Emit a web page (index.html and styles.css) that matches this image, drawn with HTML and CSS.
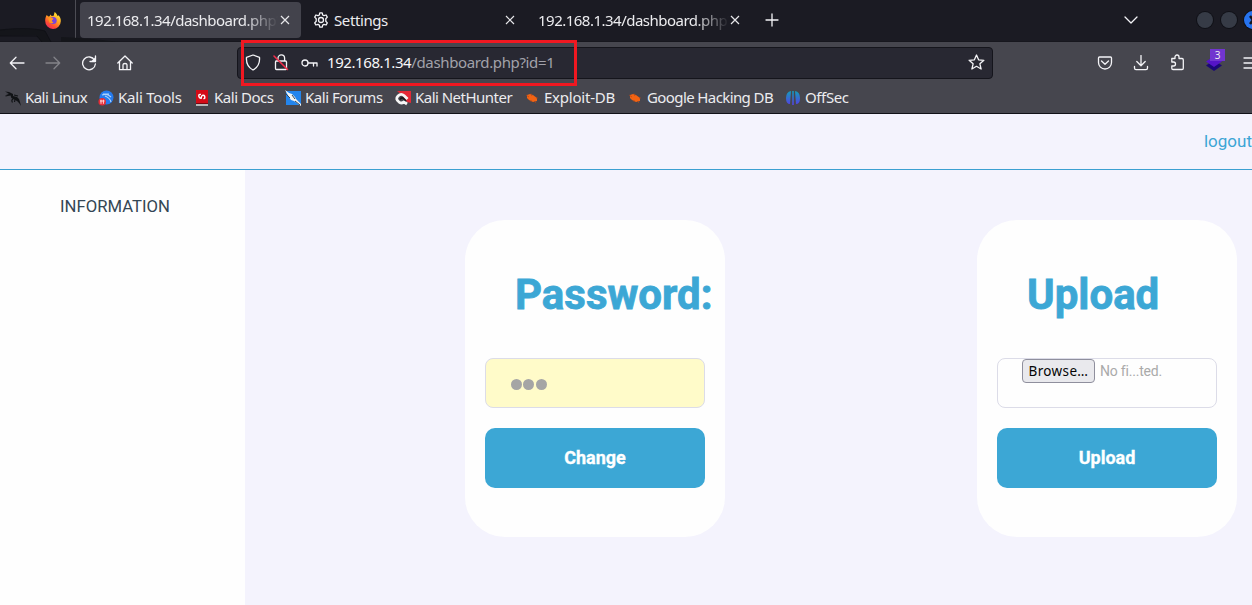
FILE: index.html
```html
<!DOCTYPE html>
<html lang="en">
<head>
<meta charset="utf-8">
<title>Dashboard</title>
<link rel="stylesheet" href="styles.css">
</head>
<body>
<div class="browser">
  <header class="tabs">
    <svg class="backdrop" width="240" height="42" viewBox="0 0 240 42"><path d="M0 30C18 28 34 28 45 31L51 42H42L36 35 0 36ZM61 37Q88 38 120 42H61Z" fill="#14151a"/><path d="M0 30C18 28 34 28 45 31L51 42M0 36H37L42 42" fill="none" stroke="#101116"/></svg>
    <svg class="fox" width="16" height="17" viewBox="0 0 16 17"><defs><linearGradient id="ff" x1=".8" y1="0" x2=".2" y2="1"><stop stop-color="#fff13a"/><stop offset=".45" stop-color="#ff9b20"/><stop offset=".75" stop-color="#ff4b35"/><stop offset="1" stop-color="#ed2765"/></linearGradient></defs><path d="M1.7 3L3.3 4.5 4.6 4.3 5.5 2.6 6.6 4 8.7 3.7 9.6 0C11 1 12 2.4 12.5 4L13.4 3.3C15.1 4.7 16 7 15.8 9.2A7.8 7.8 0 0 1 .2 9C.1 6.8.7 4.6 1.7 3Z" fill="url(#ff)"/><circle cx="8.2" cy="8.5" r="3.5" fill="#7944dc"/><path d="M3.2 6.4Q6 5.2 8.6 6.7L7 8.2Q6 9.3 8.5 10.4 6.8 12 4.4 10.5Z" fill="#ff9920"/></svg>
    <div class="tab tab-active"><span class="fade">192.168.1.34/dashboard.php?</span><svg class="close" width="10" height="10"><path d="M1 1L9 9M9 1L1 9"/></svg></div>
    <div class="tab tab-settings"><svg class="line" width="16" height="16" viewBox="0 0 16 16"><circle cx="8" cy="8" r="2.5"/><path d="M6.8.9H9.2L9.7 3 11 3.7 13.1 3 14.3 5.1 12.8 6.7V9.3L14.3 10.9 13.1 13 11 12.4 9.7 13.1 9.2 15.2H6.8L6.3 13.1 5 12.4 2.9 13 1.7 10.9 3.2 9.3V6.7L1.7 5.1 2.9 3 5 3.7 6.3 3Z"/></svg><span class="title">Settings</span><svg class="close" width="10" height="10"><path d="M1 1L9 9M9 1L1 9"/></svg></div>
    <div class="tab tab-last"><span class="fade">192.168.1.34/dashboard.php?</span><svg class="close" width="10" height="10"><path d="M1 1L9 9M9 1L1 9"/></svg></div>
    <svg class="line plus" width="14" height="14"><path d="M7 1V13M1 7H13"/></svg>
    <svg class="line chevron" width="14" height="8"><path d="M1 1L7 7 13 1"/></svg>
    <div class="controls"><i></i><i></i><i class="shut"><svg width="18" height="18"><path d="M6 5L12 13M12 5L6 13" fill="none" stroke="#11151f" stroke-width="2.5"/></svg></i></div>
  </header>
  <nav class="toolbar">
    <svg class="line" width="16" height="16" viewBox="0 0 16 16"><path d="M15 8H1.5M7 2.3L1.3 8 7 13.7"/></svg>
    <svg class="line dim" width="16" height="16" viewBox="0 0 16 16"><path d="M1 8H14.5M9 2.3L14.7 8 9 13.7"/></svg>
    <svg class="line" width="16" height="16" viewBox="0 0 16 16"><path d="M13.6 5.2A6.4 6.4 0 1 0 14.4 9"/><path d="M14.5 1V6.5H9" /><path d="M14.5 2V6.5H10Z" fill="#f4f4f7" stroke="none"/></svg>
    <svg class="line" width="16" height="16" viewBox="0 0 16 16"><path d="M.8 8L8 1 15.2 8M2.5 6.8V14.7H13.5V6.8M6 14.5V9.8Q6 8.5 8 8.5T10 9.8V14.5"/></svg>
    <div class="address">
      <svg class="line" width="16" height="17" viewBox="0 0 16 17"><path d="M8 1L14.5 3.3C15 8.8 13 13.2 8 16 3 13.2 1 8.8 1.5 3.3Z"/></svg>
      <svg class="line" width="16" height="17" viewBox="0 0 16 17"><path d="M5 7V4.2A3.3 3.3 0 0 1 11.6 4.2V7M3 7H12.5Q13.5 7 13.5 8V14.8Q13.5 15.5 12.8 15.5H3.5Q2.5 15.5 2.5 14.5V8Q2.5 7 3.5 7"/><path d="M1 2L14.5 15.5" stroke="#f52d4b" stroke-width="1.5"/></svg>
      <svg class="line" width="17" height="12" viewBox="0 0 17 12"><circle cx="4" cy="6" r="3"/><path d="M7 6H16V9M12.5 6V9"/></svg>
      <span class="url"><b>192.168.1.34</b>/dashboard.php?id=1</span>
      <svg class="line star" width="17" height="17" viewBox="0 0 17 17"><path d="M8.5 1L10.6 5.8 15.9 6.3 11.9 9.8 13.1 15 8.5 12.3 3.9 15 5.1 9.8 1.1 6.3 6.4 5.8Z"/></svg>
    </div>
    <div class="actions">
      <svg class="line" width="16" height="16" viewBox="0 0 16 16"><path d="M2.5 2H13.5Q14.5 2 14.5 3V7.5A6.5 6.5 0 0 1 1.5 7.5V3Q1.5 2 2.5 2ZM4.5 6L8 9.3 11.5 6"/></svg>
      <svg class="line" width="16" height="16" viewBox="0 0 16 16"><path d="M8 .5V10.5M3.8 6.5L8 10.7 12.2 6.5M1.5 11.5V13Q1.5 14.7 3 14.7H13Q14.5 14.7 14.5 13V11.5"/></svg>
      <svg class="line" width="16" height="17" viewBox="0 0 16 17"><path d="M2.8 4.5H6V3A2 2 0 0 1 10 3V4.5H13Q14.3 4.5 14.3 6V14.2Q14.3 15.5 13 15.5H4Q2.8 15.5 2.8 14.2V12H4.5A1.8 1.8 0 0 0 4.5 8H2.8Z"/></svg>
      <div class="layers"><svg width="18" height="16" viewBox="0 0 18 16"><path d="M9 5L17 10.5 9 16 1 10.5Z" fill="#1b0877"/><path d="M9 1L17 6.5 9 12 1 6.5Z" fill="#5514c7"/></svg><span>3</span></div>
      <svg class="line" width="16" height="12"><path d="M1 1H16M1 6H16M1 11H16"/></svg>
    </div>
  </nav>
  <nav class="bookmarks">
    <a><svg width="16" height="16"><path d="M0 1.5L4 2 8 4 8 6 12 7Q15 9 15 12L16 16Q13 10.5 8.5 9.2 5.5 8 5.5 5.5L1 4 4 3.8Z" fill="#101215"/><path d="M.5 6L5 5M9 5L13 6M8 9Q6 10 7.5 12.5M10 9.5L9.5 12" fill="none" stroke="#101215" stroke-width="1.2"/></svg><span class="bm1">Kali Linux</span></a>
    <a><svg width="16" height="16"><circle cx="8.5" cy="7.5" r="7" fill="#247aee"/><path d="M4 5Q9 3 13 7M7 6Q12 8 13 12M5 4L11 4" fill="none" stroke="#acd2fc" stroke-width="1.2"/><circle cx="4.2" cy="11.8" r="3.8" fill="#e42c36"/><path d="M3 9.7V13.8M5.4 9.7V13.8M2 11H6.5" stroke="#ffd6d9"/></svg><span class="bm2">Kali Tools</span></a>
    <a><svg width="16" height="16"><path d="M2 0H14V13H2Z" fill="#d40b17"/><path d="M2 15H14" stroke="#ddd" stroke-width="1.5"/><path d="M2 13.5H14" stroke="#760910"/><path d="M7 4.5Q4.5 4 4.8 6.2T7.2 8.2Q7.5 5 9.3 5.2T10.8 8.2L9.5 9" fill="none" stroke="#fff" stroke-width="1.4"/></svg><span class="bm3">Kali Docs</span></a>
    <a><svg width="16" height="16"><path d="M1 1H16V15H1Z" fill="#2385ed"/><path d="M0 0L4 3 7 4 10 7 11 9 16 14V16L9 11 6 10 4 7Z" fill="#f3f4f3"/><path d="M0 3L5 8M7 5L10 9M10 11L15 15" stroke="#334858"/></svg><span class="bm4">Kali Forums</span></a>
    <a><svg width="16" height="16"><path d="M2 1H16V13L12 12 7 5Z" fill="#e42936"/><path d="M12.5 9L9 5.5Q6 3 3 6T4 12Q6 14 9 12L12 14" fill="none" stroke="#f5f5f5" stroke-width="2.8"/><path d="M5 9.5Q6 7.5 8 8L11 11" fill="none" stroke="#17191c" stroke-width="1.6"/></svg><span class="bm5">Kali NetHunter</span></a>
    <a><svg class="bug" width="16" height="16"><path d="M3 5L6 4 9 5 13 8 13 11 9 12 5 10 3 8Z" fill="#f26313"/><path d="M2 5L5 7M7 3.5L8 6M12 8L14 8M7 10V12M10 11L12 13" stroke="#ae461b" stroke-width=".7"/></svg><span class="bm6">Exploit-DB</span></a>
    <a><svg class="bug" width="16" height="16"><path d="M3 5L6 4 9 5 13 8 13 11 9 12 5 10 3 8Z" fill="#f26313"/><path d="M2 5L5 7M7 3.5L8 6M12 8L14 8M7 10V12M10 11L12 13" stroke="#ae461b" stroke-width=".7"/></svg><span class="bm7">Google Hacking DB</span></a>
    <a><svg width="16" height="16"><defs><linearGradient id="os" x2="0" y2="1"><stop stop-color="#149cba"/><stop offset="1" stop-color="#5440e4"/></linearGradient></defs><path d="M6 1Q1 2 1 8T5 14ZM10 1Q15 2 15 8T11 14ZM7.2 1H8.8V15H7.2Z" fill="url(#os)"/></svg><span class="bm8">OffSec</span></a>
  </nav>
  <div class="highlight"></div>
</div>
<main class="page">
  <header class="topbar"><a>logout</a></header>
  <div class="content">
    <aside>INFORMATION</aside>
    <section class="cards">
      <form class="card"><h1>Password:</h1><div class="field filled"><i></i><i></i><i></i></div><button type="button">Change</button></form>
      <form class="card"><h1>Upload</h1><div class="field file"><span class="browse">Browse…</span><span class="empty">No fi...ted.</span></div><button type="button">Upload</button></form>
    </section>
  </div>
</main>
</body>
</html>
```
FILE: styles.css
```css
*{box-sizing:border-box}
body{margin:0;width:1252px;height:605px;overflow:hidden;font-family:Roboto,sans-serif;background:#f4f3fd}
svg{display:block;flex:none}
.line{fill:none;stroke:#f4f4f7;stroke-width:1.3;stroke-linecap:round;stroke-linejoin:round}
.browser{position:relative;height:114px;background:#46464e;border-bottom:1px solid #111118;color:#ececef;font:15px "Noto Sans",sans-serif}
.tabs{position:relative;height:42px;background:#1b1b23;display:flex;align-items:center;padding-bottom:1px;border-bottom:1px solid #17171e}
.backdrop{position:absolute;left:0;top:0}
.fox{position:relative;margin-left:45px;margin-right:14px}
.tabs::before{content:"";position:absolute;left:75px;top:0;width:1px;height:41px;background:#4c4c54}
.tab{display:flex;align-items:center;height:36px;white-space:nowrap;flex:none}
.tab-active{position:relative;margin-left:5px;width:221px;background:#43434c;border-radius:4px;padding-left:7px}
.fade{width:191px;letter-spacing:-.51px;-webkit-mask-image:linear-gradient(90deg,#000 82%,transparent);mask-image:linear-gradient(90deg,#000 82%,transparent)}
.close{stroke:#e7e7ea;stroke-width:1.2;fill:none;margin-left:2px}
.tab-settings{width:225px;padding-left:12px}
.tab-settings .title{margin-left:5px;width:171px;letter-spacing:-.4px}
.tab-settings .close{margin-left:0}
.tab-last{width:227px;padding-left:12px}
.tab-last .close{margin-left:1px}
.plus{margin-left:12px}
.chevron{margin-left:345px}
.controls{display:flex;align-items:center;gap:8px;margin-left:59px;flex:none}
.controls i{width:16px;height:16px;border-radius:50%;background:#363b46;box-shadow:0 0 0 1px #101117;flex:none}
.controls .shut{width:18px;height:18px;background:#2774ef;margin-left:-1px}
.toolbar{height:41px;display:flex;align-items:center;padding-left:9px;gap:20px}
.dim{opacity:.35}
.address{width:756px;height:32px;margin-left:84px;display:flex;align-items:center;background:#282832;border:1px solid #15151c;border-radius:4px;flex:none;padding-left:7px}
.address svg+svg{margin-left:12px}
.url{margin-left:9px;padding-bottom:2px;color:#a2a2aa;letter-spacing:-.36px}
.url b{font-weight:400;color:#f7f7f9;letter-spacing:-.42px}
.address .star{margin-left:auto;margin-right:7px}
.actions{display:flex;align-items:center;gap:20px;margin-left:84px;flex:none}
.layers{position:relative;width:18px}
.layers span{position:absolute;left:5px;top:-6px;width:15px;height:12px;background:#7135cf;font-size:10px;line-height:12px;text-align:center}
.bookmarks{display:grid;grid-template-columns:93px 96px 91px 110px 129px 103px 158px 80px;height:30px;padding-left:5px;align-items:center}
.bookmarks a{display:flex;align-items:center;gap:4px;white-space:nowrap}
.bookmarks span{padding-bottom:2px}
.bm1{letter-spacing:-.54px}
.bm2{letter-spacing:-.22px}
.bm3{letter-spacing:-.48px}
.bm4{letter-spacing:-.48px}
.bm5{letter-spacing:-.52px}
.bm6{letter-spacing:-.22px}
.bm7{letter-spacing:-.6px}
.bm8{letter-spacing:-.38px}
.highlight{position:absolute;left:241px;top:40px;width:336px;height:46px;border:3px solid #f01821}
.topbar{height:56px;border-bottom:1px solid #3b9fd1;padding-bottom:2px;display:flex;justify-content:flex-end;align-items:center;color:#3ca5d5;font-size:17px}
.content{display:flex;height:435px}
aside{width:245px;background:#fefefe;padding:27px 0 0 60px;font-size:16.7px;line-height:20px;color:#344654;flex:none}
.cards{display:flex;gap:252px;padding:50px 0 0 220px;align-items:flex-start}
.card{width:260px;height:317px;background:#fefefe;border-radius:40px;padding:0 20px;flex:none}
h1{margin:0;padding:50px 0 0 30px;height:138px;font-size:42px;line-height:50px;font-weight:700;-webkit-text-stroke:.8px #3ca7d5;color:#3ca7d5;white-space:nowrap}
.field{height:50px;border:1px solid #dcdce8;border-radius:8px;display:flex;padding-left:24px;font-size:14px;color:#aaa}
.filled{background:#fffbc9;align-items:center;gap:1px;padding-left:24.5px;padding-top:2px}
.filled i{width:11px;height:11px;border-radius:50%;background:#a5a5a5;margin-right:.5px}
.file{gap:5px;line-height:24px}
.empty{letter-spacing:-.2px}
.browse{width:73px;height:24px;border:1px solid #8f8f9d;border-radius:4px;background:#e9e9ed;color:#050505;font:13.5px/22px "Noto Sans",sans-serif;letter-spacing:.35px;text-align:center}
button{display:block;width:220px;height:60px;margin-top:20px;border:0;border-radius:10px;padding:0 0 2px;background:#3ca7d5;color:white;font:700 18px Roboto,sans-serif;-webkit-text-stroke:.3px white}
```
